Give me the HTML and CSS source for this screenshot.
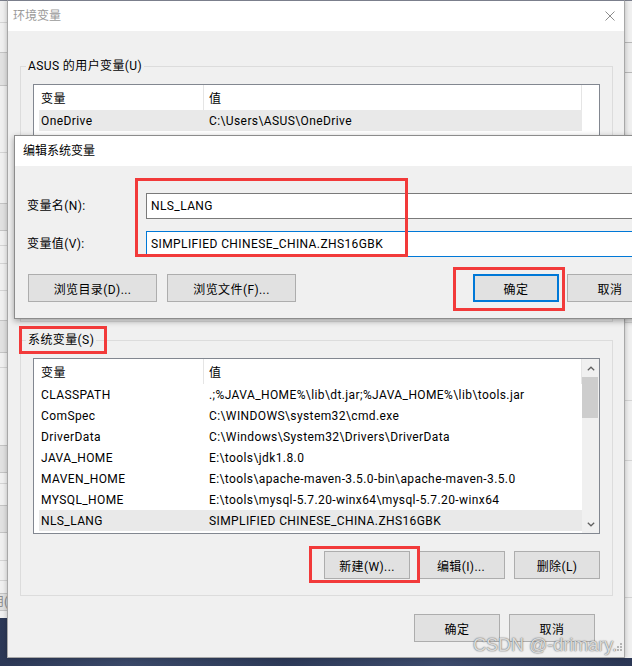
FILE: index.html
```html
<!DOCTYPE html>
<html lang="zh-CN">
<head>
<meta charset="utf-8">
<title>环境变量</title>
<link rel="stylesheet" href="styles.css">
</head>
<body>
<div class="screen">
  <div class="bgwin bgwin-left">
    <div class="e"></div><div class="ln"></div><div class="e"></div><div class="bk"></div>
    <div class="e"></div><div class="ln"></div><div class="e"></div><div class="bk"></div>
    <div class="e"></div><div class="ln"></div><div class="e"></div><div class="ln"></div>
    <div class="e"></div><div class="ln"></div><div class="e"></div><div class="bk"></div>
    <div class="e"></div><div class="ln"></div><div class="e"></div><div class="bk"></div>
    <div class="e"></div><div class="ln"></div><div class="e"></div><div class="bk"></div>
    <div class="e"></div><div class="ln"></div><div class="e"></div><div class="ln"></div>
    <div class="e"></div><div class="bk bk-text">应用(A)</div><div class="e"></div>
  </div>
  <div class="bgwin bgwin-right">
    <div class="e"></div><div class="box"></div><div class="e"></div><div class="ln"></div>
    <div class="e"></div><div class="ln"></div><div class="e"></div><div class="ln"></div>
    <div class="e"></div><div class="ln"></div><div class="e"></div>
  </div>

  <div class="window main">
    <div class="titlebar">
      <span class="title inactive">环境变量</span>
      <svg class="close" width="10" height="10" viewBox="0 0 10 10"><path d="M0.5 0.5 L9.5 9.5 M9.5 0.5 L0.5 9.5" stroke="#8c8c8c" stroke-width="1" fill="none"/></svg>
    </div>
    <div class="body">
      <fieldset class="group">
        <legend>ASUS 的用户变量(U)</legend>
        <div class="list">
          <div class="list-main">
            <div class="lv-head"><span class="c1">变量</span><span class="c2">值</span></div>
            <div class="lv-row sel"><span class="c1">OneDrive</span><span class="c2">C:\Users\ASUS\OneDrive</span></div>
          </div>
          <div class="vscroll blank"></div>
        </div>
        <div class="btnrow">
          <button class="btn">新建(N)...</button>
          <button class="btn wide">编辑(E)...</button>
          <button class="btn">删除(D)</button>
        </div>
      </fieldset>

      <fieldset class="group sys">
        <legend>系统变量(S)</legend>
        <div class="list">
          <div class="list-main">
            <div class="lv-head"><span class="c1">变量</span><span class="c2">值</span></div>
            <div class="lv-row"><span class="c1">CLASSPATH</span><span class="c2">.;%JAVA_HOME%\lib\dt.jar;%JAVA_HOME%\lib\tools.jar</span></div>
            <div class="lv-row"><span class="c1">ComSpec</span><span class="c2">C:\WINDOWS\system32\cmd.exe</span></div>
            <div class="lv-row"><span class="c1">DriverData</span><span class="c2">C:\Windows\System32\Drivers\DriverData</span></div>
            <div class="lv-row"><span class="c1">JAVA_HOME</span><span class="c2">E:\tools\jdk1.8.0</span></div>
            <div class="lv-row"><span class="c1">MAVEN_HOME</span><span class="c2">E:\tools\apache-maven-3.5.0-bin\apache-maven-3.5.0</span></div>
            <div class="lv-row"><span class="c1">MYSQL_HOME</span><span class="c2">E:\tools\mysql-5.7.20-winx64\mysql-5.7.20-winx64</span></div>
            <div class="lv-row sel"><span class="c1">NLS_LANG</span><span class="c2">SIMPLIFIED CHINESE_CHINA.ZHS16GBK</span></div>
          </div>
          <div class="vscroll">
            <div class="sb-btn up"><svg width="8" height="5" viewBox="0 0 8 5"><path d="M0.8 4.3 L4 1.2 L7.2 4.3" stroke="#606060" stroke-width="1.2" fill="none"/></svg></div>
            <div class="sb-track"><div class="sb-thumb"></div></div>
            <div class="sb-btn down"><svg width="8" height="5" viewBox="0 0 8 5"><path d="M0.8 0.7 L4 3.8 L7.2 0.7" stroke="#606060" stroke-width="1.2" fill="none"/></svg></div>
          </div>
        </div>
        <div class="btnrow">
          <button class="btn">新建(W)...</button>
          <button class="btn wide">编辑(I)...</button>
          <button class="btn">删除(L)</button>
        </div>
      </fieldset>

      <div class="footer">
        <button class="btn">确定</button>
        <button class="btn">取消</button>
      </div>
    </div>
    <svg class="grip" width="8" height="8" viewBox="0 0 8 8"><g fill="#b5b5b5"><rect x="6" y="0" width="2" height="2"/><rect x="3" y="3" width="2" height="2"/><rect x="6" y="3" width="2" height="2"/><rect x="0" y="6" width="2" height="2"/><rect x="3" y="6" width="2" height="2"/><rect x="6" y="6" width="2" height="2"/></g></svg>
  </div>

  <div class="window edit">
    <div class="titlebar">
      <span class="title">编辑系统变量</span>
    </div>
    <div class="body">
      <div class="form">
        <label class="lbl" for="vname">变量名(N):</label>
        <input id="vname" class="field" type="text" value="NLS_LANG">
        <label class="lbl" for="vval">变量值(V):</label>
        <input id="vval" class="field focus" type="text" value="SIMPLIFIED CHINESE_CHINA.ZHS16GBK">
      </div>
      <div class="editbtns">
        <button class="btn big">浏览目录(D)...</button>
        <button class="btn big">浏览文件(F)...</button>
        <button class="btn default">确定</button>
        <button class="btn">取消</button>
      </div>
    </div>
  </div>

  <div class="mark m1"></div>
  <div class="mark m2"></div>
  <div class="mark m3"></div>
  <div class="mark m4"></div>

  <div class="watermark">CSDN @-drimary.</div>
</div>
</body>
</html>
```

FILE: styles.css
```css
* { box-sizing: border-box; }

html, body {
  margin: 0;
  padding: 0;
  width: 632px;
  height: 666px;
  overflow: hidden;
}

body {
  font-family: Roboto, "Noto Sans CJK SC", sans-serif;
  font-size: 12px;
  letter-spacing: 0.4px;
  color: #000;
}

.screen {
  position: relative;
  width: 632px;
  height: 666px;
  overflow: hidden;
  background: linear-gradient(90deg, #2c3856 0%, #3a4868 20%, #2d3a58 45%, #3d4b6c 70%, #2b3755 100%);
}

/* background windows (only their edges show) */
.bgwin {
  position: absolute;
  top: 0;
  background: #f0f0f0;
  border-top: 1px solid #7b7f8c;
  display: grid;
}
.bgwin-left {
  left: -60px;
  width: 80px;
  height: 618px;
  grid-template-rows: 21px 1px 29px 34px 66px 1px 50px 28px 14px 1px 17px 1px 26px 1px 29px 33px 14px 1px 77px 28px 10px 1px 21px 28px 27px 1px 19px 1px 12px 18px 1fr;
}
.bgwin-right {
  left: 618px;
  width: 40px;
  height: 658px;
  grid-template-rows: 41px 31px 249px 1px 77px 1px 59px 1px 136px 1px 1fr;
}
.bgwin .ln { background: #d4d4d4; }
.bgwin .bk {
  background: #e1e1e1;
  border-top: 1px solid #c4c4c4;
  border-bottom: 1px solid #c4c4c4;
}
.bgwin .bk-text {
  color: #8a8a8a;
  font-size: 12px;
  line-height: 16px;
  letter-spacing: 0;
  padding-left: 40px;
  white-space: nowrap;
  overflow: hidden;
}
.bgwin .box {
  border: 1px solid #b8b8b8;
  margin: 0 0 0 6px;
  background: #ececec;
}

/* windows */
.window {
  position: absolute;
  display: flex;
  flex-direction: column;
  background: #f0f0f0;
}

.titlebar {
  height: 30px;
  flex: none;
  background: #fff;
  display: flex;
  align-items: center;
  justify-content: space-between;
}
.title { line-height: 16px; letter-spacing: 0; }
.title.inactive { color: #9a9a9a; }

.main {
  left: 7px;
  top: 0;
  width: 618px;
  height: 658px;
  border: 1px solid #a8a8a8;
  border-top-color: #7b7f8c;
  box-shadow: 0 0 5px rgba(0, 0, 0, 0.25);
}
.main .titlebar { padding: 0 9px 0 5px; }
.main .close { display: block; }
.main .body {
  flex: 1;
  padding: 27px 11px 15px 12px;
  display: flex;
  flex-direction: column;
}

.grip {
  position: absolute;
  right: 2px;
  bottom: 6px;
}

/* group boxes */
.group {
  margin: 0;
  border: 1px solid #dcdcdc;
  padding: 10px 12px 16px 12px;
  min-width: 0;
}
.group.sys { margin-top: 10px; }
.group legend {
  padding: 0 2px;
  margin-left: -7px;
  line-height: 16px;
}

/* list view */
.list {
  height: 176px;
  border: 1px solid #828790;
  background: #fff;
  display: flex;
  overflow: hidden;
}
.list-main {
  flex: 1;
  min-width: 0;
  display: flex;
  flex-direction: column;
}
.lv-head {
  height: 25px;
  flex: none;
  display: flex;
  align-items: center;
  border-right: 1px solid #e5e5e5;
}
.lv-head .c1 {
  width: 170px;
  height: 100%;
  display: flex;
  align-items: center;
  padding-left: 7px;
  border-right: 1px solid #e5e5e5;
}
.lv-head .c2 { padding-left: 5px; }
.lv-row {
  height: 21px;
  flex: none;
  margin-left: 5px;
  display: flex;
  align-items: center;
  white-space: nowrap;
}
.lv-row.sel { background: #e9e9e9; }
.lv-row .c1 { width: 164px; padding-left: 2px; flex: none; }
.lv-row .c2 { padding-left: 6px; }

.vscroll {
  width: 17px;
  flex: none;
  background: #f0f0f0;
  display: flex;
  flex-direction: column;
}
.vscroll.blank { background: #fff; }
.sb-btn {
  height: 18px;
  flex: none;
  display: flex;
  align-items: center;
  justify-content: center;
}
.sb-btn svg { display: block; }
.sb-track { flex: 1; }
.sb-thumb {
  height: 41px;
  background: #cdcdcd;
  margin: 0 1px 0 0;
}

/* buttons */
.btn {
  font: inherit;
  letter-spacing: inherit;
  color: #000;
  height: 28px;
  width: 86px;
  padding: 0;
  background: #e1e1e1;
  border: 1px solid #adadad;
  border-radius: 0;
  flex: none;
}
.btn.wide { width: 88px; }
.btn.big { width: 129px; }
.btn.default { border: 2px solid #0078d7; }

.btnrow {
  margin-top: 17px;
  display: flex;
  justify-content: flex-end;
  gap: 7px;
}
.btnrow .btn + .btn + .btn { margin-left: 2px; }

.footer {
  margin-top: 18px;
  margin-right: 18px;
  display: flex;
  justify-content: flex-end;
  gap: 9px;
}

/* edit dialog */
.edit {
  left: 14px;
  top: 135px;
  width: 652px;
  height: 184px;
  border: 1px solid #8c8c8c;
  box-shadow: 0 2px 6px rgba(0, 0, 0, 0.35);
}
.edit .titlebar { padding-left: 8px; }
.edit .body {
  flex: 1;
  padding: 27px 12px 16px 12px;
}
.form {
  display: grid;
  grid-template-columns: 119px 1fr;
  row-gap: 12px;
  align-items: center;
}
.lbl { line-height: 16px; }
.field {
  font: inherit;
  letter-spacing: inherit;
  color: #000;
  height: 26px;
  border: 1px solid #7a7a7a;
  padding: 0 4px;
  background: #fff;
  outline: none;
  width: 100%;
}
.field.focus { border-color: #0078d7; }
.editbtns {
  margin-top: 17px;
  display: flex;
  gap: 10px;
  padding-left: 1px;
}
.editbtns .btn.default { margin-left: auto; }
.editbtns .btn.default + .btn { margin-left: -2px; }

/* red annotation boxes */
.mark {
  position: absolute;
  border: 3px solid #f23a3a;
}
.m1 { left: 135px; top: 178px; width: 273px; height: 79px; }
.m2 { left: 453px; top: 267px; width: 112px; height: 44px; }
.m3 { left: 19px; top: 326px; width: 88px; height: 28px; }
.m4 { left: 309px; top: 546px; width: 111px; height: 37px; }

.watermark {
  position: absolute;
  right: 15px;
  top: 635px;
  font-family: "Liberation Sans", Arial, sans-serif;
  font-size: 18px;
  line-height: 20px;
  letter-spacing: 0;
  color: rgba(232, 232, 232, 0.9);
  text-shadow: 0 0 1px #666, 0 0 2px rgba(0, 0, 0, 0.4);
  white-space: nowrap;
}
```
